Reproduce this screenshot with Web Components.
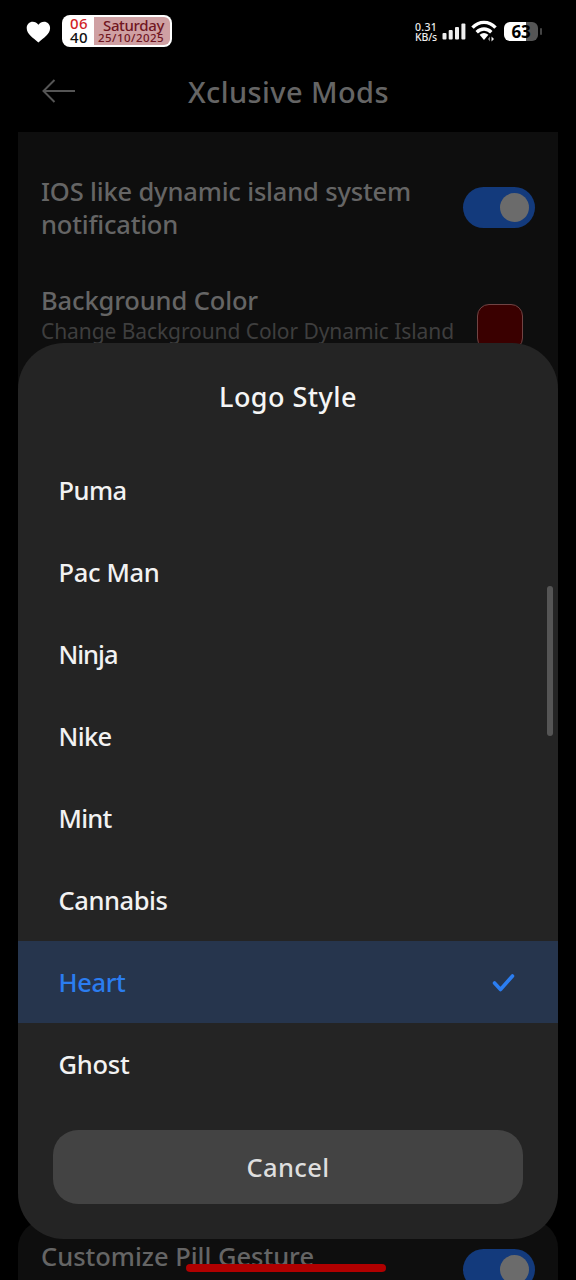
<!DOCTYPE html>
<html lang="en"><head><meta charset="utf-8"><title>Xclusive Mods</title>
<style>
html,body{margin:0;background:#000;overflow:hidden}
body{width:576px;height:1280px;font-family:"Noto Sans","Open Sans",sans-serif}
</style></head><body>
<mods-screen></mods-screen>
<script>
function define(name, html, init){
  customElements.define(name, class extends HTMLElement{
    constructor(){super();this.attachShadow({mode:'open'}).innerHTML=html;}
    connectedCallback(){if(init)init.call(this,this.shadowRoot);}
  });
}

/* Single line of text whose tracking is adjusted to fill a given width. */
define('fit-text', `<style>:host{display:block;white-space:pre;line-height:1}span{display:inline-block}</style><span><slot></slot></span>`, function(r){
  const s=r.querySelector('span'), w=+this.getAttribute('w'), n=this.textContent.length;
  const d=(w-s.getBoundingClientRect().width)/n;
  s.style.letterSpacing=d+'px';
});

define('toggle-switch', `<style>:host{display:flex;width:72px;height:41px;border-radius:21px;background:#133a7c;justify-content:flex-end;align-items:center;box-sizing:border-box;padding-right:6px;flex:none}i{width:29px;height:29px;border-radius:50%;background:#6b6b6b}</style><i></i>`);

define('date-chip', `<style>
:host{display:flex;box-sizing:border-box;width:110px;height:32px;border-radius:8px;background:#fff;padding:2px}
.t{width:30px;display:flex;flex-direction:column;align-items:center;font-size:15px;font-weight:500;color:#111}
.t fit-text{height:14px;line-height:14px;margin-top:-1px}.t .h{color:#d21f28}
.t .m{margin-top:0}
.d{flex:1;background:#cfa0a3;border-radius:0 6px 6px 0;color:#711622;display:flex;flex-direction:column;align-items:flex-end;padding-right:6px;font-weight:500}
.a{font-size:15px;height:15px;line-height:15px;margin-top:1px}.b{font-size:11.500px;height:12px;line-height:12px;margin-top:-1px}
</style><div class="t"><fit-text class="h" w="18">06</fit-text><fit-text class="m" w="18">40</fit-text></div><div class="d"><fit-text class="a" w="61">Saturday</fit-text><fit-text class="b" w="66">25/10/2025</fit-text></div>`);

define('status-bar', `<style>
:host{display:flex;height:63px;align-items:center;padding:0 34px 0 26px;box-sizing:border-box}
.heart{margin-right:11px}date-chip{margin:-1px auto 0 0}
.net{color:#eee;font-size:10.500px;font-weight:500;display:flex;flex-direction:column;margin-right:5px}
.net fit-text{line-height:10px}
.bat{display:flex;align-items:center;margin-left:7px}
.cell{width:34px;height:19px;border-radius:6px;background:linear-gradient(90deg,#fff 66%,#555 66%);font-size:17px;font-weight:700;color:#000;display:flex;justify-content:center;align-items:center}
.nub{width:2px;height:7px;border-radius:1px;background:#444;margin-left:2px}
svg{flex:none}
</style>
<svg class="heart" width="25" height="22" viewBox="0 0 25 22"><path fill="#fff" d="M12.4 21.500C7 17 .7 13.200.7 7.100.7 3.300 3.500.7 6.700.7c2.300 0 4.300 1 5.700 3 1.400-2 3.400-3 5.700-3 3.200 0 6 2.600 6 6.400 0 6.100-6.300 9.900-11.700 14.400z"/></svg>
<date-chip></date-chip>
<div class="net"><fit-text w="22">0.31</fit-text><fit-text w="22">KB/s</fit-text></div>
<svg width="24" height="17" viewBox="0 0 24 17" fill="#eee"><rect x="0.500" y="10" width="4" height="6.500" rx="1"/><rect x="6.700" y="7" width="4" height="9.500" rx="1"/><rect x="13" y="4" width="4" height="12.500" rx="1"/><rect x="19.400" y="0.500" width="4" height="16" rx="1"/></svg>
<svg style="margin:-1px 0 0 5px" width="26" height="22" viewBox="0 0 26 22"><g fill="none" stroke="#fff" stroke-width="3.400"><path d="M1.500 7.600C8 .6 18 .6 24.500 7.600"/><path d="M5.700 12.200C10 8 16 8 20.300 12.200"/></g><path fill="#fff" d="M8.600 14.800q4.400-3.400 8.800 0L13 20z"/><path fill="#888" d="M19 16.500v5l-2-2.500z"/><path fill="#eee" d="M20.500 16.500v5l2.500-2.500z"/></svg>
<div class="bat"><div class="cell"><fit-text w="19">63</fit-text></div><div class="nub"></div></div>`);

define('title-bar', `<style>:host{display:grid;grid-template-columns:146px 1fr 146px;height:69px;padding:0 42px;align-items:center;color:#656565;box-sizing:border-box}
svg{display:block;margin-top:-13px}fit-text{font-size:29px;font-weight:500;margin-top:-13px}</style>
<svg width="34" height="24" viewBox="0 0 34 24" fill="none" stroke="#555" stroke-width="2"><path d="M33 12H2M12.500 1L1.500 12l11 11"/></svg><fit-text w="201">Xclusive Mods</fit-text>`);

define('setting-row', `<style>:host{display:flex;justify-content:space-between;align-items:center;padding:0 23px;color:#656565;font-size:25.500px;font-weight:500}</style><div><slot></slot></div><slot name="end"></slot>`);

define('settings-page', `<style>
:host{display:block;height:1280px;overflow:hidden}
.card{margin:0 18px;background:#0e0e0e;height:1057px;overflow:hidden}
.second{margin-top:31px;height:200px;border-radius:28px;overflow:hidden}
.card,.second{box-sizing:border-box}
.one{padding-top:43px}.one fit-text{height:33px;line-height:33px}.one toggle-switch{margin-top:-2px}
.two{padding-top:43px;align-items:flex-start}
.two fit-text{height:32px;line-height:32px}
.two .sub{font-size:21px;font-weight:400;color:#3e3e3e;height:30px;line-height:30px}
.sw{width:46px;height:46px;border-radius:12px;background:#3a0000;border:1px solid #704444;box-sizing:border-box;margin:20px 12px 0 0}
.three{padding-top:19px;align-items:flex-start}.three toggle-switch{margin-top:10px}
.three fit-text{height:34px;line-height:34px}.three .sub{font-size:20.500px;font-weight:400;color:#3e3e3e;height:28px;line-height:28px}
</style>
<status-bar></status-bar><title-bar></title-bar>
<div class="card">
<setting-row class="one"><fit-text w="370">IOS like dynamic island system</fit-text><fit-text w="137">notification</fit-text><toggle-switch slot="end"></toggle-switch></setting-row>
<setting-row class="two"><fit-text w="217">Background Color</fit-text><fit-text class="sub" w="413">Change Background Color Dynamic Island</fit-text><div slot="end" class="sw"></div></setting-row>
</div>
<div class="card second"><setting-row class="three"><fit-text w="273">Customize Pill Gesture</fit-text><fit-text class="sub" w="270">Customize pill gesture bar</fit-text><toggle-switch slot="end"></toggle-switch></setting-row></div>`);

define('style-option', `<style>
:host{display:flex;height:82.100px;align-items:center;justify-content:space-between;padding:2px 43px 0 40.500px;box-sizing:border-box;color:#f2f2f2;font-size:25.500px;font-weight:500}
:host([selected]){background:#26354d;color:#2b7df0}
svg{display:none}:host([selected]) svg{display:block;margin-top:-1px}
</style><slot></slot><svg width="23" height="20" viewBox="0 0 23 20" fill="none" stroke="#2b7df0" stroke-width="3.600" stroke-linecap="round" stroke-linejoin="round"><path d="M2.500 10l6 6.500L20.500 3"/></svg>`);

define('logo-dialog', `<style>
:host{display:flex;flex-direction:column;box-sizing:border-box;width:540px;height:896px;border-radius:46px;background:#242424;color:#f5f5f5;overflow:hidden}
header{height:105.400px;padding-top:2px;box-sizing:border-box;display:flex;align-items:center;justify-content:center;font-size:27px;font-weight:500;flex:none}
.list{height:657.600px;flex:none}
button{margin:24px 35px 0;height:74px;border:0;padding:2px 0 0;border-radius:25px;background:#434343;color:#dedede;font:500 25.500px "Noto Sans",sans-serif;display:flex;align-items:center;justify-content:center;flex:none}
.thumb{position:absolute;left:529px;top:243px;width:6px;height:150px;border-radius:3px;background:#555}
</style><header><fit-text w="138">Logo Style</fit-text></header><div class="list">
<style-option><fit-text w="68">Puma</fit-text></style-option>
<style-option><fit-text w="101">Pac Man</fit-text></style-option>
<style-option><fit-text w="59">Ninja</fit-text></style-option>
<style-option><fit-text w="53">Nike</fit-text></style-option>
<style-option><fit-text w="53">Mint</fit-text></style-option>
<style-option><fit-text w="109">Cannabis</fit-text></style-option>
<style-option selected><fit-text w="67">Heart</fit-text></style-option>
<style-option><fit-text w="71">Ghost</fit-text></style-option>
</div><button><fit-text w="83">Cancel</fit-text></button><div class="thumb"></div>`);

define('mods-screen', `<style>:host{display:block;position:relative;width:576px;height:1280px;overflow:hidden}
logo-dialog{position:absolute;left:18px;top:343px}
.pill{position:absolute;left:186px;top:1264px;width:200px;height:8px;border-radius:4px;background:#b00000}</style>
<settings-page></settings-page><logo-dialog></logo-dialog><div class="pill"></div>`);
</script></body></html>
